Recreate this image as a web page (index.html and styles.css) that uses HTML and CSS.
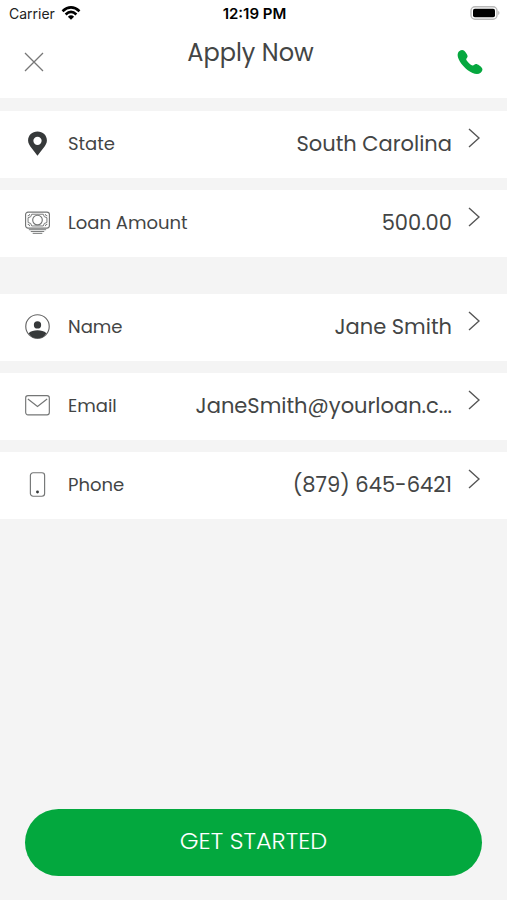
FILE: index.html
```html
<!DOCTYPE html>
<html lang="en">
<head>
<meta charset="utf-8">
<meta name="viewport" content="width=device-width, initial-scale=1">
<title>Apply Now</title>
<link rel="stylesheet" href="styles.css">
</head>
<body>
<div class="screen">
  <header class="header">
    <div class="status">
      <div class="carrier">
        <span>Carrier</span>
        <svg width="20" height="14" viewBox="0 0 20 14" aria-hidden="true"><g fill="none" stroke="#000" stroke-width="2.6"><path d="M1.5 5.2Q10 -2.4 18.5 5.2"/><path d="M4.6 8.5Q10 3.4 15.4 8.5"/></g><path d="M6.9 10.7Q10 8 13.1 10.7L10 13.8Z"/></svg>
      </div>
      <time class="time">12:19 PM</time>
      <svg class="battery" width="30" height="14" viewBox="0 0 30 14" aria-hidden="true"><rect x="1" y=".7" width="26" height="12.6" rx="4" fill="#fff" stroke="#b9b9b9" stroke-width="1.4"/><rect x="3" y="2.7" width="22" height="8.6" rx="1.8"/><path d="M28.3 4.8Q30.6 7 28.3 9.2Z" fill="#aaa"/></svg>
    </div>
    <div class="titlebar">
      <button class="icon-button" type="button" aria-label="Close">
        <svg width="20" height="20" viewBox="0 0 20 20" aria-hidden="true"><path d="M1 1L19 19M19 1L1 19" stroke="#777" stroke-width="1.3"/></svg>
      </button>
      <h1 class="title">Apply Now</h1>
      <button class="icon-button" type="button" aria-label="Call">
        <svg width="26" height="26" viewBox="0 0 26 26" aria-hidden="true"><path d="M2.2 2.2C3.8.8 5.6.5 6.9 1.4C8.2 2.4 10.2 5.1 10.6 6.9C10.8 8.4 9 9.4 9.2 10.4C9.6 11.8 13.8 16.1 15.6 16.6C16.8 16.8 17.5 15.2 19 15.1C20.7 15.1 24 17.4 25.1 19.2C26 20.7 25.1 22.5 23.6 23.7C20.8 26 15.8 24.9 10.8 21.2C6 17.5 1.3 11.3.7 6.9C.5 4.8 1 3.1 2.2 2.2Z" fill="#06a83f"/></svg>
      </button>
    </div>
  </header>

  <main class="content">
    <section class="group">
      <button class="row" type="button">
        <svg class="icon" viewBox="0 0 26 26" aria-hidden="true"><path fill="#36393a" fill-rule="evenodd" d="M13 .5C7.4.5 3.2 4.5 3.2 9.8C3.2 15 9.6 20.2 13 25.8C16.4 20.2 22.8 15 22.8 9.8C22.8 4.5 18.6.5 13 .5ZM13 5.9a4.3 4.3 0 1 1 0 8.6a4.3 4.3 0 0 1 0-8.6Z"/></svg>
        <span class="label">State</span>
        <span class="value">South Carolina</span>
        <svg class="chevron" viewBox="0 0 12 20" aria-hidden="true"><path d="M1 1L11 10L1 19"/></svg>
      </button>
      <button class="row" type="button">
        <svg class="icon line" viewBox="0 0 26 26" aria-hidden="true"><rect x=".6" y="2.2" width="24.8" height="16.6" rx="2.6"/><path class="fine" d="M7 4.4H19Q19.2 7.8 22.8 8V13Q19.2 13.2 19 16.6H7Q6.8 13.2 3.2 13V8Q6.8 7.8 7 4.4ZM2.8 6.1Q4.9 6 5 4.2M21 4.2Q21.1 6 23.2 6.1M2.8 14.9Q4.9 15 5 16.8M21 16.8Q21.1 15 23.2 14.9M4 20.5H22M6 22.4H20M8 24.3H18"/><circle cx="13" cy="10.5" r="5" fill="#fff"/></svg>
        <span class="label">Loan Amount</span>
        <span class="value">500.00</span>
        <svg class="chevron" viewBox="0 0 12 20" aria-hidden="true"><path d="M1 1L11 10L1 19"/></svg>
      </button>
    </section>
    <section class="group">
      <button class="row" type="button">
        <svg class="icon" viewBox="0 0 26 26" aria-hidden="true"><circle cx="13" cy="13" r="12.2" fill="#fff" stroke="#666" stroke-width="1.2"/><circle cx="13" cy="11.4" r="3.8" fill="#36393a"/><path d="M3.7 20Q7.4 17 13 17T22.3 20Q18.8 25.4 13 25.4T3.7 20Z" fill="#36393a"/></svg>
        <span class="label">Name</span>
        <span class="value">Jane Smith</span>
        <svg class="chevron" viewBox="0 0 12 20" aria-hidden="true"><path d="M1 1L11 10L1 19"/></svg>
      </button>
      <button class="row" type="button">
        <svg class="icon line" viewBox="0 0 26 26" aria-hidden="true"><rect x=".7" y="2.7" width="24.6" height="20" rx="2.4"/><path d="M3 6.2L13 14L23 6.2"/></svg>
        <span class="label">Email</span>
        <span class="value">JaneSmith@yourloan.c...</span>
        <svg class="chevron" viewBox="0 0 12 20" aria-hidden="true"><path d="M1 1L11 10L1 19"/></svg>
      </button>
      <button class="row" type="button">
        <svg class="icon line" viewBox="0 0 26 26" aria-hidden="true"><rect x="5.6" y=".8" width="14.8" height="24.4" rx="2.8"/><circle cx="13" cy="20.8" r="1.5" fill="#36393a" stroke="none"/></svg>
        <span class="label">Phone</span>
        <span class="value">(879) 645-6421</span>
        <svg class="chevron" viewBox="0 0 12 20" aria-hidden="true"><path d="M1 1L11 10L1 19"/></svg>
      </button>
    </section>
  </main>

  <footer class="footer">
    <button class="submit" type="button">GET STARTED</button>
  </footer>
</div>
</body>
</html>
```
FILE: styles.css
```css
* {
  box-sizing: border-box;
}

body {
  margin: 0;
  background: #f4f4f4;
  color: #434545;
  font-family: Poppins, Inter, sans-serif;
}

button {
  border: 0;
  padding: 0;
  background: none;
  color: inherit;
  font: inherit;
  cursor: pointer;
}

svg {
  display: block;
  flex: none;
}

.screen {
  display: flex;
  flex-direction: column;
  min-height: 100vh;
}

.header {
  background: #fff;
  padding-bottom: 16px;
}

.status {
  display: grid;
  grid-template-columns: 1fr auto 1fr;
  align-items: center;
  height: 28px;
  padding: 0 7px 2px 9px;
  color: #222;
  font-family: Inter, sans-serif;
  font-size: 14px;
}

.carrier {
  display: flex;
  align-items: center;
  gap: 6px;
}

.time {
  color: #000;
  font-size: 15px;
  font-weight: 600;
}

.battery {
  justify-self: end;
}

.titlebar {
  display: flex;
  align-items: center;
  justify-content: space-between;
  padding: 0 24px;
}

.icon-button {
  display: grid;
  place-items: center;
  min-width: 20px;
  height: 54px;
  padding-top: 14px;
}

.title {
  margin: 0;
  padding-bottom: 4px;
  font-size: 24px;
  font-weight: 400;
  line-height: 48px;
}

.content {
  display: flex;
  flex: 1;
  flex-direction: column;
  gap: 37px;
  padding-top: 13px;
}

.group {
  display: flex;
  flex-direction: column;
  gap: 12px;
}

.row {
  display: flex;
  align-items: center;
  width: 100%;
  height: 67px;
  padding: 0 27px 2px 25px;
  background: #fff;
  text-align: left;
}

.icon {
  width: 25px;
  height: 25px;
  margin-right: 18px;
}

.line {
  fill: none;
  stroke: #747676;
  stroke-width: 1.2;
}

.fine {
  stroke-width: 1;
}

.label {
  font-size: 18px;
}

.value {
  flex: 1;
  font-size: 21px;
  text-align: right;
}

.chevron {
  width: 12px;
  height: 20px;
  margin: 0 0 12px 16px;
  fill: none;
  stroke: #555;
  stroke-width: 1.4;
}

.footer {
  padding: 24px 25px;
}

.submit {
  width: 100%;
  height: 67px;
  padding-bottom: 4px;
  border-radius: 34px;
  background: #03a83e;
  color: #fff;
  font-size: 24px;
  font-weight: 300;
}
```
